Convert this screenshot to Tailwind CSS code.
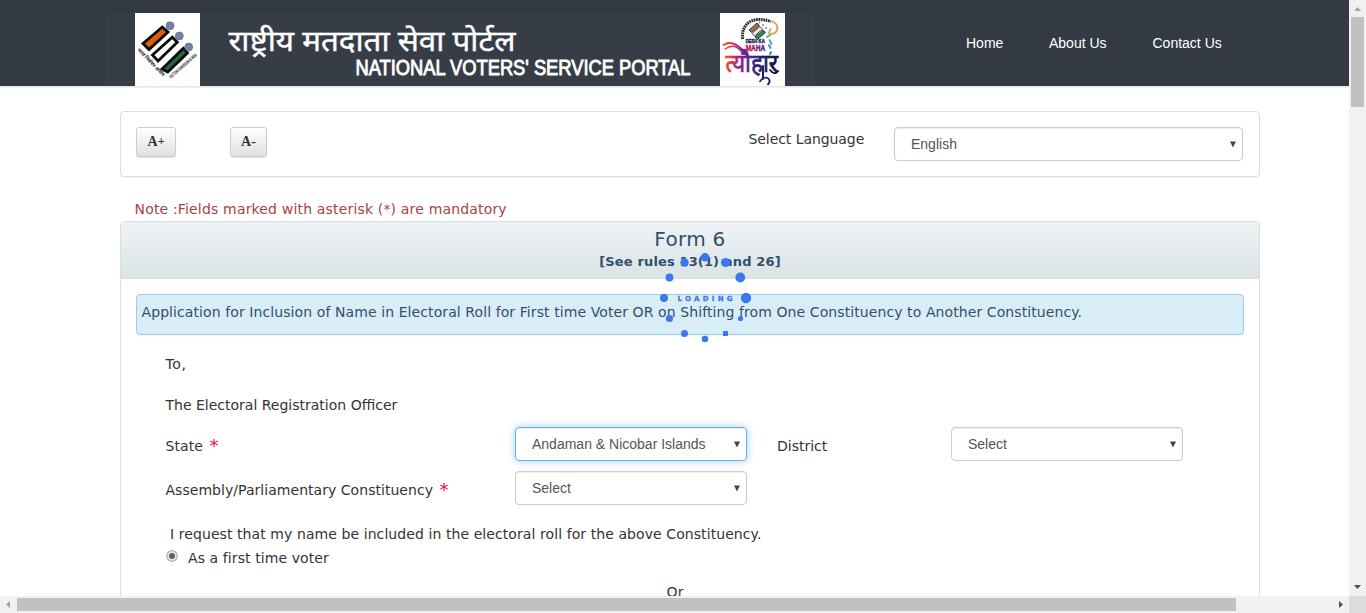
<!DOCTYPE html>
<html lang="en">
<head>
<meta charset="utf-8">
<title>Form 6</title>
<script src="https://cdn.jsdelivr.net/npm/@tailwindcss/browser@4"></script>
</head>
<body class="flex h-[613px] w-[1366px] flex-col overflow-hidden bg-white font-['DejaVu_Sans',sans-serif] text-[14px] leading-5 tracking-[0.09px] text-[#333]">
<div class="flex h-[596px]">
  <div class="relative h-full w-[1349px] overflow-hidden">
    <header class="flex h-[86px] bg-[#343a44] pl-[105px] pt-[13px] shadow-[0_1px_2px_rgba(0,0,0,0.15)]">
      <svg class="h-[73px] w-[710px] shrink-0" viewBox="105 13 710 73">
        <rect x="105" y="13" width="710" height="73" fill="#373d46"/>
        <rect x="135" y="13" width="65" height="73" fill="#fff"/>
        <g stroke="#0b0b0b" stroke-width="2.800">
          <path d="M143 43.500L162.300 27L168 32L149 49.500Z" fill="#e05e0a"/>
          <path d="M152.500 55L172.300 37.200L177.300 42.300L158 61Z" fill="#fff"/>
          <path d="M162 69L183.300 48.200L187.500 53L167.700 72Z" fill="#25693a"/>
        </g>
        <g fill="#7185a1" stroke="#50617b" stroke-width=".6">
          <circle cx="170" cy="25.800" r="4"/><circle cx="179.300" cy="36" r="4"/><circle cx="188.700" cy="47" r="4"/>
        </g>
        <g font-family="Noto Sans Devanagari, Liberation Sans, sans-serif" letter-spacing="0" fill="#222" font-size="5" font-weight="bold">
          <text transform="translate(137 50) rotate(46)" textLength="37" lengthAdjust="spacingAndGlyphs">भारत निर्वाचन आयोग</text>
          <text transform="translate(171 78.500) rotate(-41)" textLength="35" lengthAdjust="spacingAndGlyphs" font-size="4.500">ELECTION COMMISSION OF INDIA</text>
        </g>
        <text x="228.500" y="50.500" textLength="287" lengthAdjust="spacingAndGlyphs" font-family="Noto Sans Devanagari, sans-serif" font-size="29" letter-spacing="0" fill="#fff" stroke="#fff" stroke-width=".4">राष्ट्रीय मतदाता सेवा पोर्टल</text>
        <text x="355.500" y="74.500" textLength="335" lengthAdjust="spacingAndGlyphs" font-family="Liberation Sans, Arial, sans-serif" font-size="21.500" letter-spacing="0" fill="#fff" stroke="#fff" stroke-width=".9">NATIONAL VOTERS' SERVICE PORTAL</text>
        <rect x="720" y="13" width="65" height="73" fill="#fff"/>
        <defs>
          <linearGradient id="fest" x1="723" x2="778" y1="0" y2="0" gradientUnits="userSpaceOnUse">
            <stop offset="0" stop-color="#f5482c"/><stop offset=".12" stop-color="#ee3b35"/><stop offset=".32" stop-color="#8c1c8a"/><stop offset=".6" stop-color="#2f2185"/><stop offset="1" stop-color="#10103f"/>
          </linearGradient>
          <linearGradient id="maha" x1="745" x2="765" y1="0" y2="0" gradientUnits="userSpaceOnUse">
            <stop offset="0" stop-color="#e51c52"/><stop offset="1" stop-color="#37248c"/>
          </linearGradient>
        </defs>
        <path d="M742.700 39C741 25 751 15 771 21.500" fill="none" stroke="#2a2a2a" stroke-width="3" stroke-dasharray="1.700 .7"/>
        <g stroke="#333" stroke-width=".9">
          <path d="M749 30l8-7 2.500 2.500-8 7z" fill="#a66b3d"/><path d="M752 33.500l8-7 2.500 2.500-8 7z" fill="#e8ecf0"/><path d="M755 37l8-7 2.500 2.500-8 7z" fill="#2d8a4b"/>
        </g>
        <g fill="#7d90a6"><circle cx="759.500" cy="22.500" r="1"/><circle cx="763" cy="25" r="1"/><circle cx="766" cy="28" r="1"/></g>
        <g fill="none" stroke-linecap="round" stroke-width="1.900">
          <path d="M772.500 21.500C780 25 778.500 34 770 34" stroke="#e99a41"/>
          <path d="M770.500 29l-1.500 4" stroke="#f3a44d"/>
          <path d="M767 37l3-2M769.500 40l2 4" stroke="#48b488"/>
          <path d="M769 45l1.500 3" stroke="#4b80c0"/>
          <path d="M771 52l-1 2" stroke="#2d9c65"/>
        </g>
        <g font-family="Liberation Sans, sans-serif" font-weight="bold" letter-spacing="0">
          <text x="745.700" y="43" font-size="6.200" textLength="19" lengthAdjust="spacingAndGlyphs" fill="#1b1550" stroke="#1b1550" stroke-width=".4">DESH KA</text>
          <text x="745.700" y="51" font-size="9" textLength="19.500" lengthAdjust="spacingAndGlyphs" fill="url(#maha)" stroke="url(#maha)" stroke-width=".5">MAHA</text>
        </g>
        <text x="725.500" y="72" textLength="52.500" lengthAdjust="spacingAndGlyphs" font-family="Noto Sans Devanagari, sans-serif" font-size="25" letter-spacing="0" fill="url(#fest)" stroke="url(#fest)" stroke-width=".7">त्यौहार</text>
        <g fill="none" stroke="url(#fest)" stroke-linecap="round">
          <path d="M723.500 45C730 41 736 43 745.500 53" stroke-width="2"/>
          <path d="M725 49C732 44 737 46 744 54" stroke-width="1.500"/>
          <path d="M763 66V79M770 70C773 74 776 74 778 71" stroke-width="2"/>
          <path d="M758 82C763 73 771 80 766 85.500" stroke-width="1.900" transform="translate(2 10) scale(1 .87)"/>
        </g>
      </svg>
      <nav class="ml-[151px] flex gap-[42px] pt-[20px] font-['Liberation_Sans',Arial,sans-serif] tracking-normal text-white">
        <a class="w-[41px]">Home</a><a class="w-[61.5px] whitespace-nowrap">About Us</a><a class="whitespace-nowrap">Contact Us</a>
      </nav>
    </header>

    <main class="ml-[120px] w-[1140px]">
      <section class="mt-[25px] flex h-[66px] items-start rounded border border-[#ddd] pl-[15px] pr-[16px] pt-[15px] shadow-[0_1px_1px_rgba(0,0,0,0.05)]">
        <button class="h-[30px] w-[40px] rounded-[3px] border border-[#ccc] bg-linear-to-b from-white to-[#e0e0e0] font-['Liberation_Serif',serif] text-[14px] font-bold shadow-[0_1px_1px_rgba(0,0,0,0.1)]">A<span class="relative -top-px text-[12px] font-semibold">+</span></button>
        <button class="ml-[54px] h-[30px] w-[37px] rounded-[3px] border border-[#ccc] bg-linear-to-b from-white to-[#e0e0e0] font-['Liberation_Serif',serif] text-[14px] font-bold shadow-[0_1px_1px_rgba(0,0,0,0.1)]">A<span>-</span></button>
        <span class="ml-auto mt-[2px] w-[145.5px] tracking-[-0.07px]">Select Language</span>
        <div class="flex h-[34px] w-[349px] items-center justify-between rounded border border-[#ccc] pl-4 pr-[6px] font-['Liberation_Sans',Arial,sans-serif] tracking-normal text-[#555] shadow-[inset_0_1px_1px_rgba(0,0,0,0.075)]"><span>English</span><svg class="h-[7px] w-[6px]" viewBox="0 0 6 7"><path d="M0 0.500h6L3 6.500z" fill="#444"/></svg></div>
      </section>

      <p class="ml-[14.5px] mt-[22px] h-[22px] tracking-[0.17px] text-[#a94442]">Note :Fields marked with asterisk (*) are mandatory</p>

      <section class="h-[500px] rounded border border-[#ddd]">
        <div class="h-[57px] rounded-t border-b border-[#ddd] bg-linear-to-b from-[#eff3f6] to-[#dae3e5] pt-[5px] text-center text-[#31506d]">
          <h1 class="text-[20px] leading-6 tracking-[0.3px]">Form 6</h1>
          <p class="text-[13px] font-bold leading-[21px] tracking-[0.14px]">[See rules 13(1) and 26]</p>
        </div>
        <div class="mx-[15px] mt-[15px] h-[41px] rounded border border-[#9acfea] bg-[#d9edf7] pl-[4.5px] pt-[7px] text-[#31506d] shadow-[0_1px_2px_rgba(0,0,0,0.05)]">Application for Inclusion of Name in Electoral Roll for First time Voter OR on Shifting from One Constituency to Another Constituency.</div>
        <div class="ml-[44.5px]">
          <p class="mt-[19px] tracking-[0.6px]">To,</p>
          <p class="mt-[21px] tracking-[0px]">The Electoral Registration Officer</p>
          <div class="mt-[12px] flex h-[34px]">
            <label class="w-[349.5px] pt-[9px]">State <span class="relative left-[2px] top-[1px] text-[18px] leading-none text-[#f01030]">*</span></label>
            <div class="flex h-[34px] w-[232px] items-center justify-between rounded border border-[#66afe9] pl-4 pr-[6px] font-['Liberation_Sans',Arial,sans-serif] tracking-normal text-[#555] shadow-[inset_0_1px_1px_rgba(0,0,0,0.075),0_0_8px_rgba(102,175,233,0.6)]"><span>Andaman &amp; Nicobar Islands</span><svg class="h-[7px] w-[6px]" viewBox="0 0 6 7"><path d="M0 0.500h6L3 6.500z" fill="#444"/></svg></div>
            <label class="ml-[30px] w-[174px] pt-[9px] tracking-[0px]">District</label>
            <div class="flex h-[34px] w-[232px] items-center justify-between rounded border border-[#ccc] pl-4 pr-[6px] font-['Liberation_Sans',Arial,sans-serif] tracking-normal text-[#555] shadow-[inset_0_1px_1px_rgba(0,0,0,0.075)]"><span>Select</span><svg class="h-[7px] w-[6px]" viewBox="0 0 6 7"><path d="M0 0.500h6L3 6.500z" fill="#444"/></svg></div>
          </div>
          <div class="mt-[10px] flex h-[34px]">
            <label class="w-[349.5px] pt-[9px] tracking-[0.04px]">Assembly/Parliamentary Constituency <span class="relative left-[2px] top-[1px] text-[18px] leading-none text-[#f01030]">*</span></label>
            <div class="flex h-[34px] w-[232px] items-center justify-between rounded border border-[#ccc] pl-4 pr-[6px] font-['Liberation_Sans',Arial,sans-serif] tracking-normal text-[#555] shadow-[inset_0_1px_1px_rgba(0,0,0,0.075)]"><span>Select</span><svg class="h-[7px] w-[6px]" viewBox="0 0 6 7"><path d="M0 0.500h6L3 6.500z" fill="#444"/></svg></div>
          </div>
          <p class="ml-[4.5px] mt-[19px] tracking-[0.08px]">I request that my name be included in the electoral roll for the above Constituency.</p>
          <div class="mt-[4px] flex">
            <svg class="mt-[2px] h-[12px] w-[12px]" viewBox="0 0 12 12"><circle cx="6" cy="6" r="5.300" fill="#e8e8e8" stroke="#b0b0b0" stroke-width="1.200"/><circle cx="6" cy="6" r="3" fill="#5e5e5e"/></svg>
            <span class="ml-[10.5px]">As a first time voter</span>
          </div>
        </div>
        <p class="mt-[14px] pr-[30px] text-center">Or</p>
      </section>
    </main>

    <svg class="absolute left-[655px] top-[250px] h-[96px] w-[100px]" viewBox="655 250 100 96" fill="#3b78f0">
      <circle cx="705" cy="257.300" r="4.300"/><circle cx="725.500" cy="262.500" r="4.600"/><circle cx="740.300" cy="277.500" r="4.900"/><circle cx="746" cy="298" r="5.200"/>
      <circle cx="684.500" cy="262.500" r="4.200"/><circle cx="669.500" cy="277.500" r="3.900"/><circle cx="664" cy="298" r="4"/><circle cx="669.500" cy="318.500" r="3.600"/>
      <circle cx="684.500" cy="333.500" r="3.500"/><circle cx="705" cy="339" r="3.300"/><rect x="723" y="331" width="5" height="5" rx=".5"/><circle cx="740.500" cy="318.500" r="2.600"/>
      <text x="677.500" y="300.800" font-family="DejaVu Sans, sans-serif" font-size="7" font-weight="bold" textLength="57.500" letter-spacing="2.500" stroke="#3b78f0" stroke-width=".3">LOADING</text>
    </svg>
  </div>
  <div class="flex w-[17px] flex-col items-center bg-[#f1f1f1]">
    <svg class="h-[17px] w-[17px]" viewBox="0 0 17 17"><path d="M5 11L8.500 7L12 11z" fill="#a3a3a3"/></svg>
    <div class="h-[90px] w-[13px] bg-[#c1c1c1]"></div>
    <svg class="mt-auto h-[17px] w-[17px]" viewBox="0 0 17 17"><path d="M5 6L8.500 10L12 6z" fill="#505050"/></svg>
  </div>
</div>
<div class="flex h-[17px] items-center bg-[#f1f1f1]">
  <svg class="h-[17px] w-[17px]" viewBox="0 0 17 17"><path d="M10 5L6 8.500L10 12z" fill="#a3a3a3"/></svg>
  <div class="h-[13px] w-[1219px] bg-[#c1c1c1]"></div>
  <svg class="ml-auto h-[17px] w-[17px]" viewBox="0 0 17 17"><path d="M7 5L11 8.500L7 12z" fill="#505050"/></svg>
  <div class="h-[17px] w-[17px] bg-[#dcdcdc]"></div>
</div>
</body>
</html>
